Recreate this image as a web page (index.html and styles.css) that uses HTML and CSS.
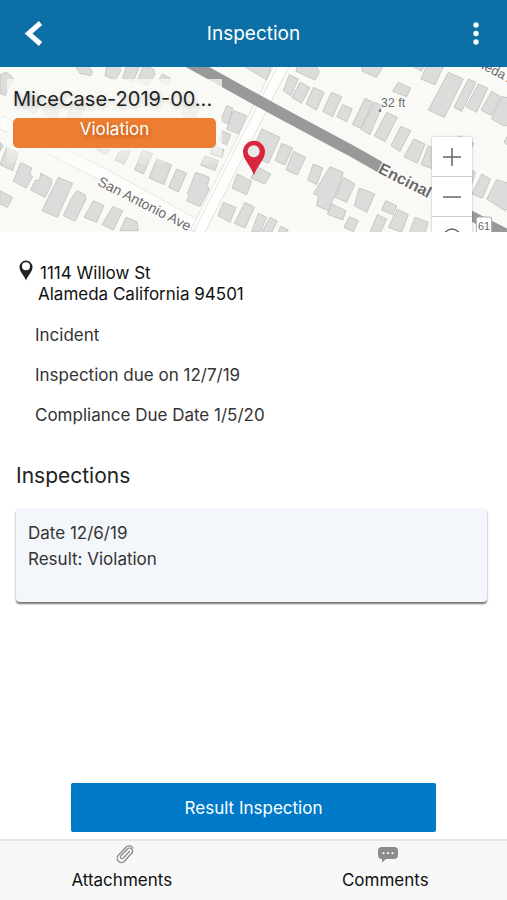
FILE: index.html
```html
<!DOCTYPE html>
<html lang="en">
<head>
<meta charset="utf-8">
<meta name="viewport" content="width=device-width, initial-scale=1">
<title>Inspection</title>
<link rel="stylesheet" href="styles.css">
</head>
<body>
<header class="topbar">
  <button class="icon-button" type="button" aria-label="Back">
    <svg width="24" height="28" viewBox="0 0 24 28"><path d="M21.500 3 9.500 13.500l12 10.500" fill="none" stroke="#fff" stroke-width="5"/></svg>
  </button>
  <h1 class="topbar-title">Inspection</h1>
  <button class="icon-button" type="button" aria-label="More options">
    <svg width="8" height="24" viewBox="0 0 8 24" fill="#fff"><circle cx="4" cy="3" r="2.700"/><circle cx="4" cy="11.500" r="2.700"/><circle cx="4" cy="20" r="2.700"/></svg>
  </button>
</header>

<section class="map" aria-label="Map">
  <svg class="map-canvas" viewBox="0 0 1521 495" preserveAspectRatio="xMidYMid slice">
    <rect width="1521" height="495" fill="#f9f9f5"/>
    <g fill="none" stroke="#e2e2e0" stroke-width="3">
      <path d="M0 165 300 318 610 488" stroke="#e6e6e3" stroke-width="40"/>
      <path d="M0 165 300 318 610 488" stroke="#fdfdfb" stroke-width="35"/>
      <path d="M848-10 592 495" stroke="#dededc" stroke-width="44"/>
      <path d="M848-10 592 495" stroke="#fefefd" stroke-width="39"/>
      <path d="M836-10 580 495"/>
    </g>
    <path d="M560-18 820 126 1048 248 1145 303" fill="none" stroke="#999" stroke-width="34"/>
    <path d="M1380 430 1521 501" fill="none" stroke="#999" stroke-width="30"/>
    <g class="buildings">
      <g transform="translate(0 -9)">
        <path d="M0 32 20 25 40 42 15 95 0 88ZM225 5 265 5 278 25 272 35 240 28ZM320 5 358 5 362 22 345 48 315 35ZM380 5 418 10 398 55 368 42ZM430 5 460 15 465 30 445 65 412 52ZM487 30 510 42 505 60 475 50Z"/>
        <path d="M90 82 125 98 105 150 70 132ZM150 105 190 125 165 170 130 150ZM220 115 255 135 230 180 200 165ZM560 105 600 125 580 170 545 150ZM285 255 330 258 318 270ZM358 262 392 260 372 300 345 288Z"/>
        <path d="M0 235 10 245 0 262ZM20 250 55 268 38 320 0 302ZM62 295 95 312 90 330 98 338 78 372 40 352ZM122 328 155 345 155 360 135 400 92 378 106 348 118 350ZM175 340 218 358 172 460 126 440ZM230 380 255 392 258 405 225 472 190 455 215 402ZM280 410 312 425 290 475 252 460ZM338 428 368 440 340 498 306 482ZM378 460 412 474 415 500 360 500ZM0 380 38 400 22 430 0 420Z"/>
        <path d="M427 260 458 268 430 330 404 318ZM470 285 515 302 492 362 447 342ZM530 315 560 328 535 383 506 370ZM587 325 628 340 622 365 628 375 600 428 560 410 568 396 562 390ZM615 275 655 290 645 320 602 303ZM640 245 672 257 665 282 630 268Z"/>
      </g>
      <g transform="translate(450 -9)">
        <path d="M230 125 248 132 235 180 212 170ZM250 140 290 155 265 210 230 195ZM215 200 242 212 230 243 206 230ZM335 195 390 220 355 298 305 275 318 235ZM322 308 362 330 345 360 302 342ZM262 330 305 352 290 392 246 372ZM220 415 258 430 240 475 204 455ZM285 415 313 430 285 492 253 478ZM325 448 350 460 330 505 305 502ZM360 460 382 472 365 505 335 505ZM392 487 415 498 410 505 385 505Z"/>
        <path d="M280 5 365 5 350 48ZM418 32 445 45 422 95 400 80ZM450 55 480 70 455 118 425 100ZM490 70 522 85 500 138 468 120ZM545 85 575 98 548 158 518 142ZM440 5 498 5 508 24 495 48 438 22ZM578 122 607 134 590 173 560 158ZM395 238 428 252 405 303 376 290ZM430 262 467 280 442 333 408 318ZM490 300 518 312 500 362 473 348Z"/>
      </g>
      <g transform="translate(960 -9)">
        <path d="M135 103 160 115 122 192 97 182ZM165 115 187 125 150 212 122 195ZM200 145 232 160 195 233 163 215ZM242 187 272 200 240 262 213 245ZM282 225 315 240 292 298 252 278ZM325 245 358 262 340 315 303 302Z"/>
        <path d="M125 5 190 5 170 40 127 22ZM235 55 272 72 260 98 218 82ZM275 5 312 5 305 22ZM320 5 372 5 345 62 303 45ZM385 25 430 45 373 160 325 138ZM445 45 468 55 425 142 402 130ZM475 60 503 72 470 145 438 128ZM515 82 542 98 515 155 483 138ZM547 97 575 105 575 185 550 185 515 165ZM570 200 552 235 570 250ZM415 215 462 238 450 260ZM440 312 467 325 450 375ZM485 330 512 345 487 403 456 390ZM530 347 575 360 575 425 555 440 500 405Z"/>
        <path d="M30 308 70 325 62 350 25 440-10 425-5 395-20 390ZM70 340 105 360 80 415 45 400ZM118 372 165 390 140 445 103 425ZM35 420 78 440 68 468 22 450ZM88 458 115 470 100 503 72 490ZM197 410 230 425 218 452 185 438ZM172 452 200 465 182 505 150 505ZM232 435 265 452 245 505 205 490ZM285 460 325 475 315 505 268 505Z"/>
      </g>
    </g>
    <g class="map-labels">
      <text transform="translate(290 353) rotate(27)" font-size="42">San Antonio Ave</text>
      <text transform="translate(1132 316) rotate(27)" font-size="48" font-weight="700">Encinal Ave</text>
      <text transform="translate(1369 -33) rotate(27)" font-size="40">Alameda Ave</text>
      <text x="1142" y="119" font-size="38">32 ft</text>
    </g>
    <circle cx="1140" cy="131" r="4" fill="#777"/>
    <rect x="1429" y="450" width="46" height="60" rx="6" fill="#fff" stroke="#aaa" stroke-width="3"/>
    <text class="route" x="1452" y="489" text-anchor="middle">61</text>
    <path d="M762 325C752 293 729 279 729 254a33 33 0 0 1 66 0C795 279 772 293 762 325Z" fill="#d9263e"/>
    <circle cx="761" cy="253" r="18" fill="#e9e9e7"/>
  </svg>
  <div class="case">
    <h2 class="case-name">MiceCase-2019-00...</h2>
    <span class="case-status">Violation</span>
  </div>
  <div class="map-controls">
    <button type="button" aria-label="Zoom in"><svg width="20" height="20" viewBox="0 0 20 20"><path d="M10 1v18M1 10h18"/></svg></button>
    <button type="button" aria-label="Zoom out"><svg width="20" height="20" viewBox="0 0 20 20"><path d="M1 10h18"/></svg></button>
    <button type="button" aria-label="My location"><svg width="20" height="20" viewBox="0 0 20 20"><circle cx="10" cy="10" r="8"/><path d="M10 5v5"/></svg></button>
  </div>
</section>

<main class="content">
  <address class="address">
    <svg class="address-pin" width="14" height="21" viewBox="0 0 14 21"><path d="M7 20.500C5 15 .5 12 .5 7a6.500 6.500 0 0 1 13 0C13.500 12 9 15 7 20.500Z" fill="#222"/><circle cx="7" cy="6.200" r="4" fill="#fff"/></svg>
    <span class="address-text"><span class="street">1114 Willow St</span><span class="city">Alameda California 94501</span></span>
  </address>
  <p class="detail">Incident</p>
  <p class="detail">Inspection due on 12/7/19</p>
  <p class="detail">Compliance Due Date 1/5/20</p>

  <h2 class="section-title">Inspections</h2>
  <article class="card">
    <p>Date 12/6/19</p>
    <p>Result: Violation</p>
  </article>
  <button class="primary" type="button">Result Inspection</button>
</main>

<nav class="tabs">
  <a class="tab" href="#attachments">
    <svg width="26" height="20" viewBox="-6 0 26 20"><path d="M14.500 6.500 8.200 13.100a1.600 1.600 0 0 1-2.300-2.300L12.400 4a3 3 0 0 1 4.300 4.200L9.400 16.300a4.200 4.200 0 0 1-6-6L10.900 2.300a4.500 4.500 0 0 1 7 .7" transform="translate(0 1)" fill="none" stroke="#8a8a8a" stroke-width="1.300" stroke-linecap="round"/></svg>
    <span>Attachments</span>
  </a>
  <a class="tab" href="#comments">
    <svg width="26" height="20" viewBox="-6 0 26 20"><path d="M4 3h12a4 4 0 0 1 4 4v4a4 4 0 0 1-4 4H8l-4 3.500V15a4 4 0 0 1-4-4V7a4 4 0 0 1 4-4Z" fill="#8c8c8c"/><g fill="#f8f8f8"><circle cx="5.500" cy="9.200" r="1.100"/><circle cx="10" cy="9.200" r="1.100"/><circle cx="14.500" cy="9.200" r="1.100"/></g></svg>
    <span>Comments</span>
  </a>
</nav>
</body>
</html>
```
FILE: styles.css
```css
* { box-sizing: border-box; }

body {
  margin: 0;
  min-height: 100vh;
  display: flex;
  flex-direction: column;
  background: #fff;
  color: #333;
  font-family: Inter, "Liberation Sans", sans-serif;
  font-size: 17px;
}

h1, h2, p { margin: 0; font-weight: 400; }

button { font: inherit; border: 0; cursor: pointer; }

.topbar {
  display: grid;
  grid-template-columns: 48px 1fr 48px;
  align-items: center;
  height: 67px;
  padding: 0 7px;
  background: #0c6fa6;
  color: #fff;
}

.icon-button {
  display: flex;
  align-items: center;
  justify-content: center;
  height: 48px;
  padding: 0;
  background: none;
}

.topbar-title { font-size: 19px; line-height: 24px; text-align: center; }

.map { position: relative; height: 165px; overflow: hidden; }

.map-canvas { display: block; width: 100%; height: 100%; }

.buildings { fill: #dcdcda; stroke: #c8c8c6; stroke-width: 3; stroke-linejoin: round; }

.map-labels {
  fill: #6a6a6a;
  stroke: #fff;
  stroke-width: 6;
  paint-order: stroke;
  font-family: "Liberation Sans", sans-serif;
}

.route { fill: #666; font: 32px "Liberation Sans", sans-serif; }

.case {
  position: absolute;
  top: 12px;
  left: 7px;
  width: 215px;
  padding: 8px 6px 16px;
  background: linear-gradient(rgba(249, 249, 246, .75) 75%, rgba(249, 249, 246, .2));
}

.case-name {
  color: #222;
  font-size: 20px;
  line-height: 24px;
  white-space: nowrap;
  text-shadow: 1px 2px 4px rgba(0, 0, 0, .2);
}

.case-status {
  display: block;
  height: 30px;
  margin-top: 7px;
  border-radius: 5px;
  background: #ed7d31;
  color: #fff;
  line-height: 23px;
  text-align: center;
  text-shadow: 1px 2px 4px rgba(0, 0, 0, .25);
}

.map-controls {
  position: absolute;
  top: 70px;
  right: 35px;
  width: 40px;
  display: grid;
  gap: 1px;
  background: #ccc;
  box-shadow: 0 0 2px rgba(0, 0, 0, .3);
}

.map-controls button {
  display: flex;
  align-items: center;
  justify-content: center;
  height: 39px;
  padding: 0;
  background: #fff;
}

.map-controls svg { fill: none; stroke: #666; stroke-width: 1.5; }

.content {
  flex: 1;
  display: flex;
  flex-direction: column;
  padding: 28px 16px 7px;
}

.address {
  display: flex;
  gap: 5px;
  padding-left: 3px;
  margin-bottom: 20px;
  color: #111;
  font-style: normal;
  line-height: 21px;
}

.address-text { display: grid; padding-top: 3px; }

.street { padding-left: 2px; }

.detail { margin-bottom: 20px; padding-left: 19px; line-height: 20px; }

.section-title {
  margin-top: 18px;
  color: #222;
  font-size: 21px;
  line-height: 26px;
}

.card {
  min-height: 94px;
  margin: 19px 4px 24px 0;
  padding: 12px;
  border-radius: 4px;
  background: #f3f6fa;
  box-shadow: 0 2px 2px rgba(0, 0, 0, .55);
  line-height: 26px;
}

.primary {
  width: 77%;
  height: 49px;
  margin: auto auto 0;
  border-radius: 2px;
  background: #007ac8;
  color: #fff;
}

.tabs {
  display: grid;
  grid-template-columns: 1fr 1fr;
  gap: 60px;
  height: 61px;
  padding: 3px 20px;
  border-top: 2px solid #e6e6e6;
  background: #f8f8f8;
}

.tab {
  display: flex;
  flex-direction: column;
  align-items: center;
  gap: 5px;
  color: #111;
  line-height: 22px;
  text-decoration: none;
}
```
